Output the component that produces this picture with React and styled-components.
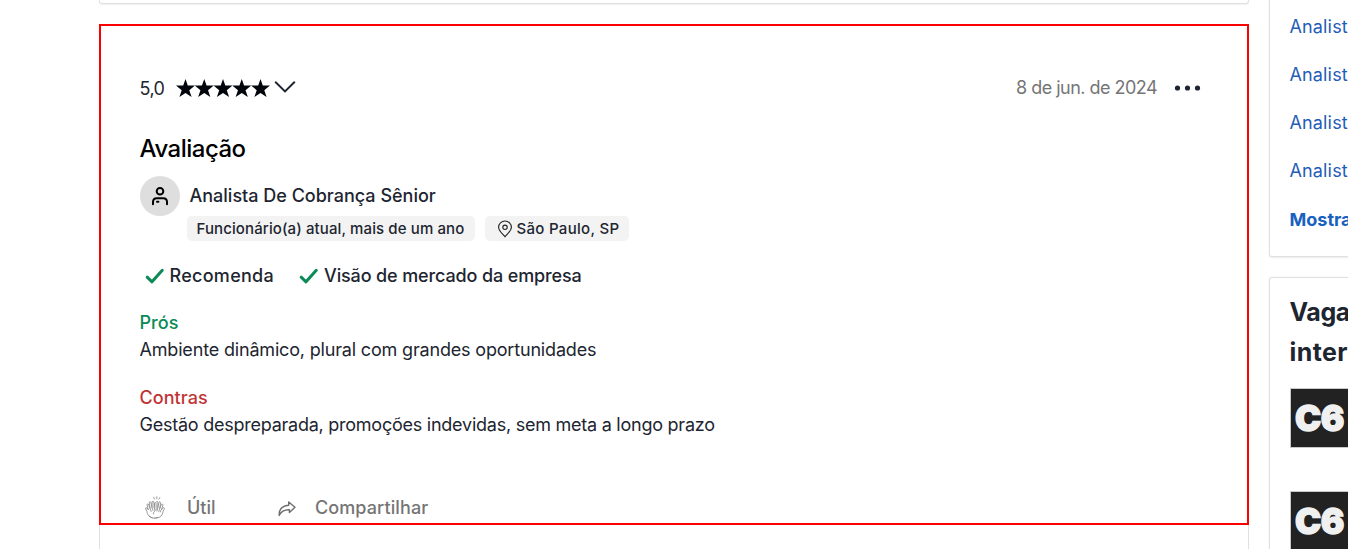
import React from "react";
import styled, { createGlobalStyle } from "styled-components";

const GlobalStyle = createGlobalStyle`
  *, *::before, *::after { box-sizing: border-box; }
  body {
    margin: 0;
    background: #fff;
    color: #1d2530;
    font-family: Inter, "Liberation Sans", sans-serif;
    font-size: 18px;
    overflow: hidden;
  }
`;

const Page = styled.div`
  display: flex;
  gap: 20px;
  width: 1348px;
  height: 549px;
  padding-left: 99px;
  overflow: hidden;
`;

const Feed = styled.main`
  flex: 0 0 1150px;
  display: flex;
  flex-direction: column;
`;

const PreviousCard = styled.div`
  height: 4px;
  margin-bottom: 20px;
  border: 1px solid #dee0e3;
  border-top: 0;
  border-radius: 0 0 3px 3px;
  box-shadow: 0 1px 1px rgba(0, 0, 0, 0.06);
`;

const Review = styled.article`
  flex: 0 0 501px;
  border: 2px solid #fb0000;
  padding: 48px 46px 0 38.5px;
`;

const CardRest = styled.div`
  flex: 1;
  border: solid #dee0e3;
  border-width: 0 1px;
`;

const ReviewHeader = styled.header`
  display: flex;
  justify-content: space-between;
  align-items: center;
  height: 28px;
`;

const Rating = styled.div`
  display: flex;
  align-items: center;
`;

const Text = styled.span`
  white-space: nowrap;
  line-height: ${(p) => p.$line || 28}px;
  font-size: ${(p) => p.$size || 18}px;
  font-weight: ${(p) => p.$weight || 400};
  letter-spacing: ${(p) => p.$track || 0}px;
  color: ${(p) => p.$color || "inherit"};
`;

const Score = styled(Text)`
  padding-top: 1px;
`;

const Stars = styled.svg`
  margin-left: 11.5px;
`;

const Chevron = styled.svg`
  margin-left: 4px;
  margin-bottom: 3px;
`;

const DateMenu = styled.div`
  display: flex;
  align-items: center;
  gap: 17px;
`;

const Title = styled.h2`
  margin: 31px 0 11px;
  font-size: 24px;
  line-height: 32px;
  font-weight: 500;
  letter-spacing: -0.5px;
  color: #000;
`;

const Author = styled.div`
  display: flex;
  align-items: center;
  gap: 10px;
  height: 40px;
`;

const Avatar = styled.div`
  display: grid;
  place-items: center;
  width: 40px;
  height: 40px;
  border-radius: 50%;
  background: #dedede;
`;

const Tags = styled.div`
  display: flex;
  gap: 10px;
  padding-left: 47.5px;
`;

const Tag = styled.div`
  display: flex;
  align-items: center;
  gap: 4px;
  width: ${(p) => p.$width}px;
  height: 25px;
  padding-left: ${(p) => p.$inset}px;
  border-radius: 5px;
  background: #f3f3f3;
`;

const Endorsements = styled.div`
  display: flex;
  gap: 25px;
  margin: 21px 0 19px;
  padding-left: 5px;
`;

const Endorsement = styled.div`
  display: flex;
  align-items: center;
  gap: 5px;
  height: 28px;
`;

const Opinion = styled.section`
  display: flex;
  flex-direction: column;
  margin-bottom: 21px;
`;

const Actions = styled.footer`
  display: flex;
  align-items: center;
  height: 28px;
  margin-top: 56px;
  padding-left: 4.5px;
`;

const Action = styled.div`
  display: flex;
  align-items: center;
  gap: ${(p) => p.$gap}px;
  width: ${(p) => p.$width}px;
`;

const Sidebar = styled.aside`
  flex: 0 0 360px;
  display: flex;
  flex-direction: column;
  gap: 20px;
`;

const LinksCard = styled.nav`
  flex: 0 0 257px;
  display: flex;
  flex-direction: column;
  padding: 3px 20px 0 19.5px;
  border: 1px solid #dee0e3;
  border-top: 0;
  border-radius: 0 0 3px 3px;
  box-shadow: 0 1px 2px rgba(0, 0, 0, 0.08);
`;

const JobsCard = styled.section`
  flex: 1 1 0;
  min-height: 0;
  padding: 14px 20px 0;
  border: 1px solid #dee0e3;
  border-bottom: 0;
  border-radius: 3px 3px 0 0;
  box-shadow: 0 0 2px rgba(0, 0, 0, 0.08);
`;

const JobsTitle = styled.h3`
  display: flex;
  flex-direction: column;
  margin: 0 0 16px -0.5px;
  font-size: 25px;
  line-height: 40px;
`;

const BankLogo = styled.div`
  display: flex;
  align-items: center;
  width: 60px;
  height: 60px;
  margin-bottom: 43px;
  padding-left: 4px;
  border: 1px solid #c9c9c9;
  background: #222;
  color: #f0f0f0;
  font-size: 35px;
  font-weight: 900;
  letter-spacing: -0.5px;
  -webkit-text-stroke: 1.4px #f0f0f0;
`;

const Star = ({ x }) => (
  <path
    transform={`translate(${x} 0)`}
    d="M9.5 0 L11.8 6.5 L19 6.5 L13.3 11.2 L15.6 18 L9.5 14.1 L3.4 18 L5.7 11.2 L0 6.5 L7.2 6.5 Z"
  />
);

const Check = () => (
  <svg width="20" height="18" viewBox="0 0 20 18" fill="none" stroke="#0a8a57" strokeWidth="3" strokeLinecap="round" strokeLinejoin="round">
    <path d="M2.2 10.2 L7 14.8 L17.3 3.3" />
  </svg>
);

const Person = () => (
  <svg width="18" height="20" viewBox="0 0 18 20" fill="none" stroke="#000" strokeWidth="2" strokeLinecap="round">
    <circle cx="9" cy="5.3" r="3.3" />
    <path d="M2 18.3 V16 Q2 12.2 5.8 12.2 H12.2 Q16 12.2 16 16 V18.3 M6 15.8 H7.4" />
  </svg>
);

const Pin = () => (
  <svg width="16" height="18" viewBox="0 0 16 18" fill="none" stroke="#222" strokeWidth="1.1">
    <path d="M8 16.7 C6.4 14.5 1.6 11 1.6 7.2 A6.4 6.2 0 0 1 14.4 7.2 C14.4 11 9.6 14.5 8 16.7 Z" />
    <circle cx="8" cy="7.3" r="2.2" />
  </svg>
);

const Clap = () => (
  <svg width="22" height="24" viewBox="0 0 22 24" fill="none" stroke="#858585" strokeWidth="0.8" strokeLinecap="round" strokeLinejoin="round">
    <path d="M8.2 22 C4.5 20.7 3.3 18.2 2.8 15.2 L1.4 12.6 Q1.5 11.2 3 12 L4.4 14 L3 8.8 Q3.2 7.4 4.4 8.3 L6 12.2 L5.2 6.3 Q5.9 5 6.9 6.3 L8 11.5 L8.1 5.6 Q9 4.6 9.8 5.8 L10.2 11.5 L10.7 6.8 Q11.6 6 12.1 7.2 V14" />
    <path d="M10.5 22 H12.6 C16.5 21.6 18.8 19 19 15.4 L20.6 12.4 Q20.2 11 18.8 12 L17.5 13.6 L19 8.8 Q18.5 7.4 17.5 8.3 L15.8 12.2 L16.7 6.5 Q16 5 15 6.3 L13.8 11.5 L13.9 5.9 Q13 4.8 12.3 6" />
    <path d="M6 12.2 L7.2 15.5 M8 11.5 L9 14.5 M10.2 11.5 L11 15 Q9.2 15.8 9.5 18 M13.8 11.5 L13 15 M15.8 12.2 L14.8 15.5 M17.5 13.6 Q16.4 14.6 16.2 16 M5 20 Q9 23.6 14 21.5" />
    <path d="M9.7 1.2 L10.4 3 M12.8 0.8 V2.8 M15.8 1.6 L14.9 3.2" />
  </svg>
);

const Share = () => (
  <svg width="18" height="18" viewBox="0 0 18 18" fill="none" stroke="#6e6e6e" strokeWidth="1.4" strokeLinejoin="round">
    <path d="M10.7 3 L17 8.3 L11.4 13.4 V10.8 C6.8 10.6 3.3 12 1.2 16.5 C0.6 10.4 4.4 6.6 10.7 6.2 Z" />
  </svg>
);

export default function App() {
  return (
    <>
      <GlobalStyle />
      <Page>
        <Feed>
          <PreviousCard />
          <Review>
            <ReviewHeader>
              <Rating>
                <Score $track={-0.55}>5,0</Score>
                <Stars width="94" height="18" viewBox="0 0 94 18" fill="#02060c">
                  {[0, 18.75, 37.5, 56.25, 75].map((x) => (
                    <Star key={x} x={x} />
                  ))}
                </Stars>
                <Chevron width="22" height="14" viewBox="0 0 22 14" fill="none" stroke="#1d2530" strokeWidth="2">
                  <path d="M1.2 1.8 L11 11.4 L20.8 1.8" />
                </Chevron>
              </Rating>
              <DateMenu>
                <Text $color="#757575" $track={-0.53}>8 de jun. de 2024</Text>
                <svg width="27" height="6" viewBox="0 0 27 6" fill="#1d2530">
                  <circle cx="3.5" cy="3" r="2.6" />
                  <circle cx="13.5" cy="3" r="2.6" />
                  <circle cx="23.5" cy="3" r="2.6" />
                </svg>
              </DateMenu>
            </ReviewHeader>
            <Title>Avaliação</Title>
            <Author>
              <Avatar><Person /></Avatar>
              <Text $weight={500}>Analista De Cobrança Sênior</Text>
            </Author>
            <Tags>
              <Tag $width={288} $inset={9.5}>
                <Text $size={15} $weight={500} $line={25} $track={0.11}>Funcionário(a) atual, mais de um ano</Text>
              </Tag>
              <Tag $width={144} $inset={11.5}>
                <Pin />
                <Text $size={15} $weight={500} $line={25} $track={0.3}>São Paulo, SP</Text>
              </Tag>
            </Tags>
            <Endorsements>
              <Endorsement>
                <Check />
                <Text $weight={500} $track={0.28}>Recomenda</Text>
              </Endorsement>
              <Endorsement>
                <Check />
                <Text $weight={500} $track={-0.13}>Visão de mercado da empresa</Text>
              </Endorsement>
            </Endorsements>
            <Opinion>
              <Text $line={27} $weight={500} $color="#0a8a57" $track={0.05}>Prós</Text>
              <Text $line={27} $track={-0.175}>Ambiente dinâmico, plural com grandes oportunidades</Text>
            </Opinion>
            <Opinion>
              <Text $line={27} $weight={500} $color="#bf3434" $track={0.05}>Contras</Text>
              <Text $line={27} $track={-0.245}>Gestão despreparada, promoções indevidas, sem meta a longo prazo</Text>
            </Opinion>
            <Actions>
              <Action $width={134} $gap={21}>
                <Clap />
                <Text $weight={500} $color="#757575">Útil</Text>
              </Action>
              <Action $width={160} $gap={19}>
                <Share />
                <Text $weight={500} $color="#757575" $track={0.1}>Compartilhar</Text>
              </Action>
            </Actions>
          </Review>
          <CardRest />
        </Feed>
        <Sidebar>
          <LinksCard>
            {[0, 1, 2, 3].map((i) => (
              <Text key={i} $line={48} $color="#1f5db8" $track={0.15}>Analista</Text>
            ))}
            <Text $line={50} $weight={700} $color="#1861bf">Mostrar mais</Text>
          </LinksCard>
          <JobsCard>
            <JobsTitle>
              <Text $size={25} $line={40} $weight={700} $track={-0.4}>Vagas que podem</Text>
              <Text $size={25} $line={40} $weight={700} $track={0.4}>interessar</Text>
            </JobsTitle>
            <BankLogo>C6</BankLogo>
            <BankLogo>C6</BankLogo>
          </JobsCard>
        </Sidebar>
      </Page>
    </>
  );
}
